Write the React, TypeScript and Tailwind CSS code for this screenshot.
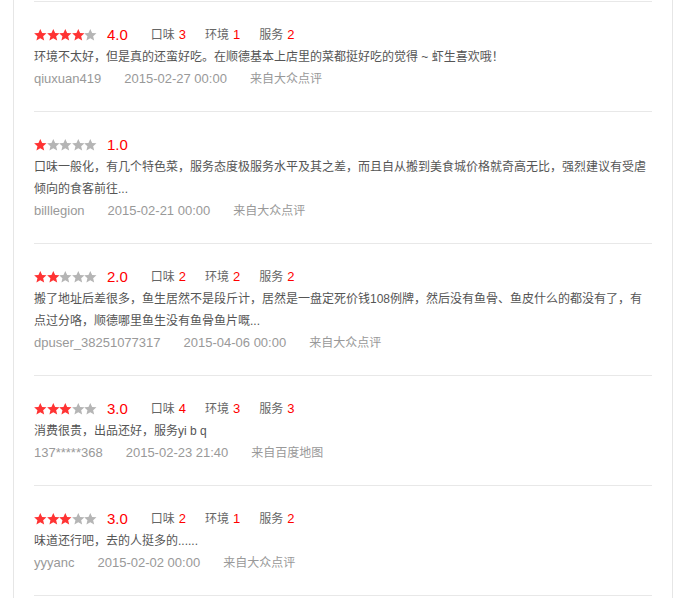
const reviews = [
    {
        score: 4,
        taste: 3,
        env: 1,
        service: 2,
        text: '环境不太好，但是真的还蛮好吃。在顺德基本上店里的菜都挺好吃的觉得 ~ 虾生喜欢哦！',
        user: 'qiuxuan419',
        time: '2015-02-27 00:00',
        source: '来自大众点评',
    },
    {
        score: 1,
        text: '口味一般化，有几个特色菜，服务态度极服务水平及其之差，而且自从搬到美食城价格就奇高无比，强烈建议有受虐倾向的食客前往...',
        user: 'billlegion',
        time: '2015-02-21 00:00',
        source: '来自大众点评',
    },
    {
        score: 2,
        taste: 2,
        env: 2,
        service: 2,
        text: '搬了地址后差很多，鱼生居然不是段斤计，居然是一盘定死价钱108例牌，然后没有鱼骨、鱼皮什么的都没有了，有点过分咯，顺德哪里鱼生没有鱼骨鱼片嘅...',
        user: 'dpuser_38251077317',
        time: '2015-04-06 00:00',
        source: '来自大众点评',
    },
    {
        score: 3,
        taste: 4,
        env: 3,
        service: 3,
        text: '消费很贵，出品还好，服务yi b q',
        user: '137*****368',
        time: '2015-02-23 21:40',
        source: '来自百度地图',
    },
    {
        score: 3,
        taste: 2,
        env: 1,
        service: 2,
        text: '味道还行吧，去的人挺多的......',
        user: 'yyyanc',
        time: '2015-02-02 00:00',
        source: '来自大众点评',
    },
]

function Star({ on }: { on: boolean }) {
    return (
        <svg width="12.6" height="12" viewBox="1 1.5 22 21" className={on ? 'text-[#f33]' : 'text-[#b5b5b5]'}>
            <polygon
                fill="currentColor"
                points="12,1.5 15.2,8.3 22.8,9 17,14.2 18.8,21.8 12,17.9 5.2,21.8 7,14.2 1.2,9 8.8,8.3"
            />
        </svg>
    )
}

function SubScore({ label, value, first }: { label: string; value: number; first?: boolean }) {
    return (
        <span className={first ? 'ml-[23px]' : 'ml-[19px]'}>
            <span className="text-[#666]">{label}</span>
            <span className="ml-[4px] text-[13px] text-[#f00]">{value}</span>
        </span>
    )
}

export default function App() {
    return (
        <div
            className="min-h-[598px] bg-white"
            style={{ fontFamily: '"Liberation Sans", "Noto Sans CJK SC", sans-serif' }}
        >
            <div className="ml-[13px] w-[660px] min-h-[598px] border-x border-[#e6e6e6] px-[20px] pt-[1px]">
                <div className="border-t border-[#e8e8e8]">
                    {reviews.map((r) => (
                        <div key={r.user} className="border-b border-[#e8e8e8] pt-[21px] pb-[21px]">
                            <div className="flex h-[23px] items-center text-[12px]">
                                <div className="flex">
                                    {[1, 2, 3, 4, 5].map((i) => (
                                        <Star key={i} on={i <= r.score} />
                                    ))}
                                </div>
                                <span className="ml-[10px] text-[15px] leading-none text-[#f00]">{r.score}.0</span>
                                {r.taste !== undefined && (
                                    <>
                                        <SubScore label="口味" value={r.taste} first />
                                        <SubScore label="环境" value={r.env!} />
                                        <SubScore label="服务" value={r.service!} />
                                    </>
                                )}
                            </div>
                            <p className="text-[12px] leading-[22px] text-[#555]">{r.text}</p>
                            <div className="flex h-[22px] items-center gap-[23px] text-[13px] text-[#999]">
                                <span>{r.user}</span>
                                <span>{r.time}</span>
                                <span className="text-[12px]">{r.source}</span>
                            </div>
                        </div>
                    ))}
                </div>
            </div>
        </div>
    )
}
